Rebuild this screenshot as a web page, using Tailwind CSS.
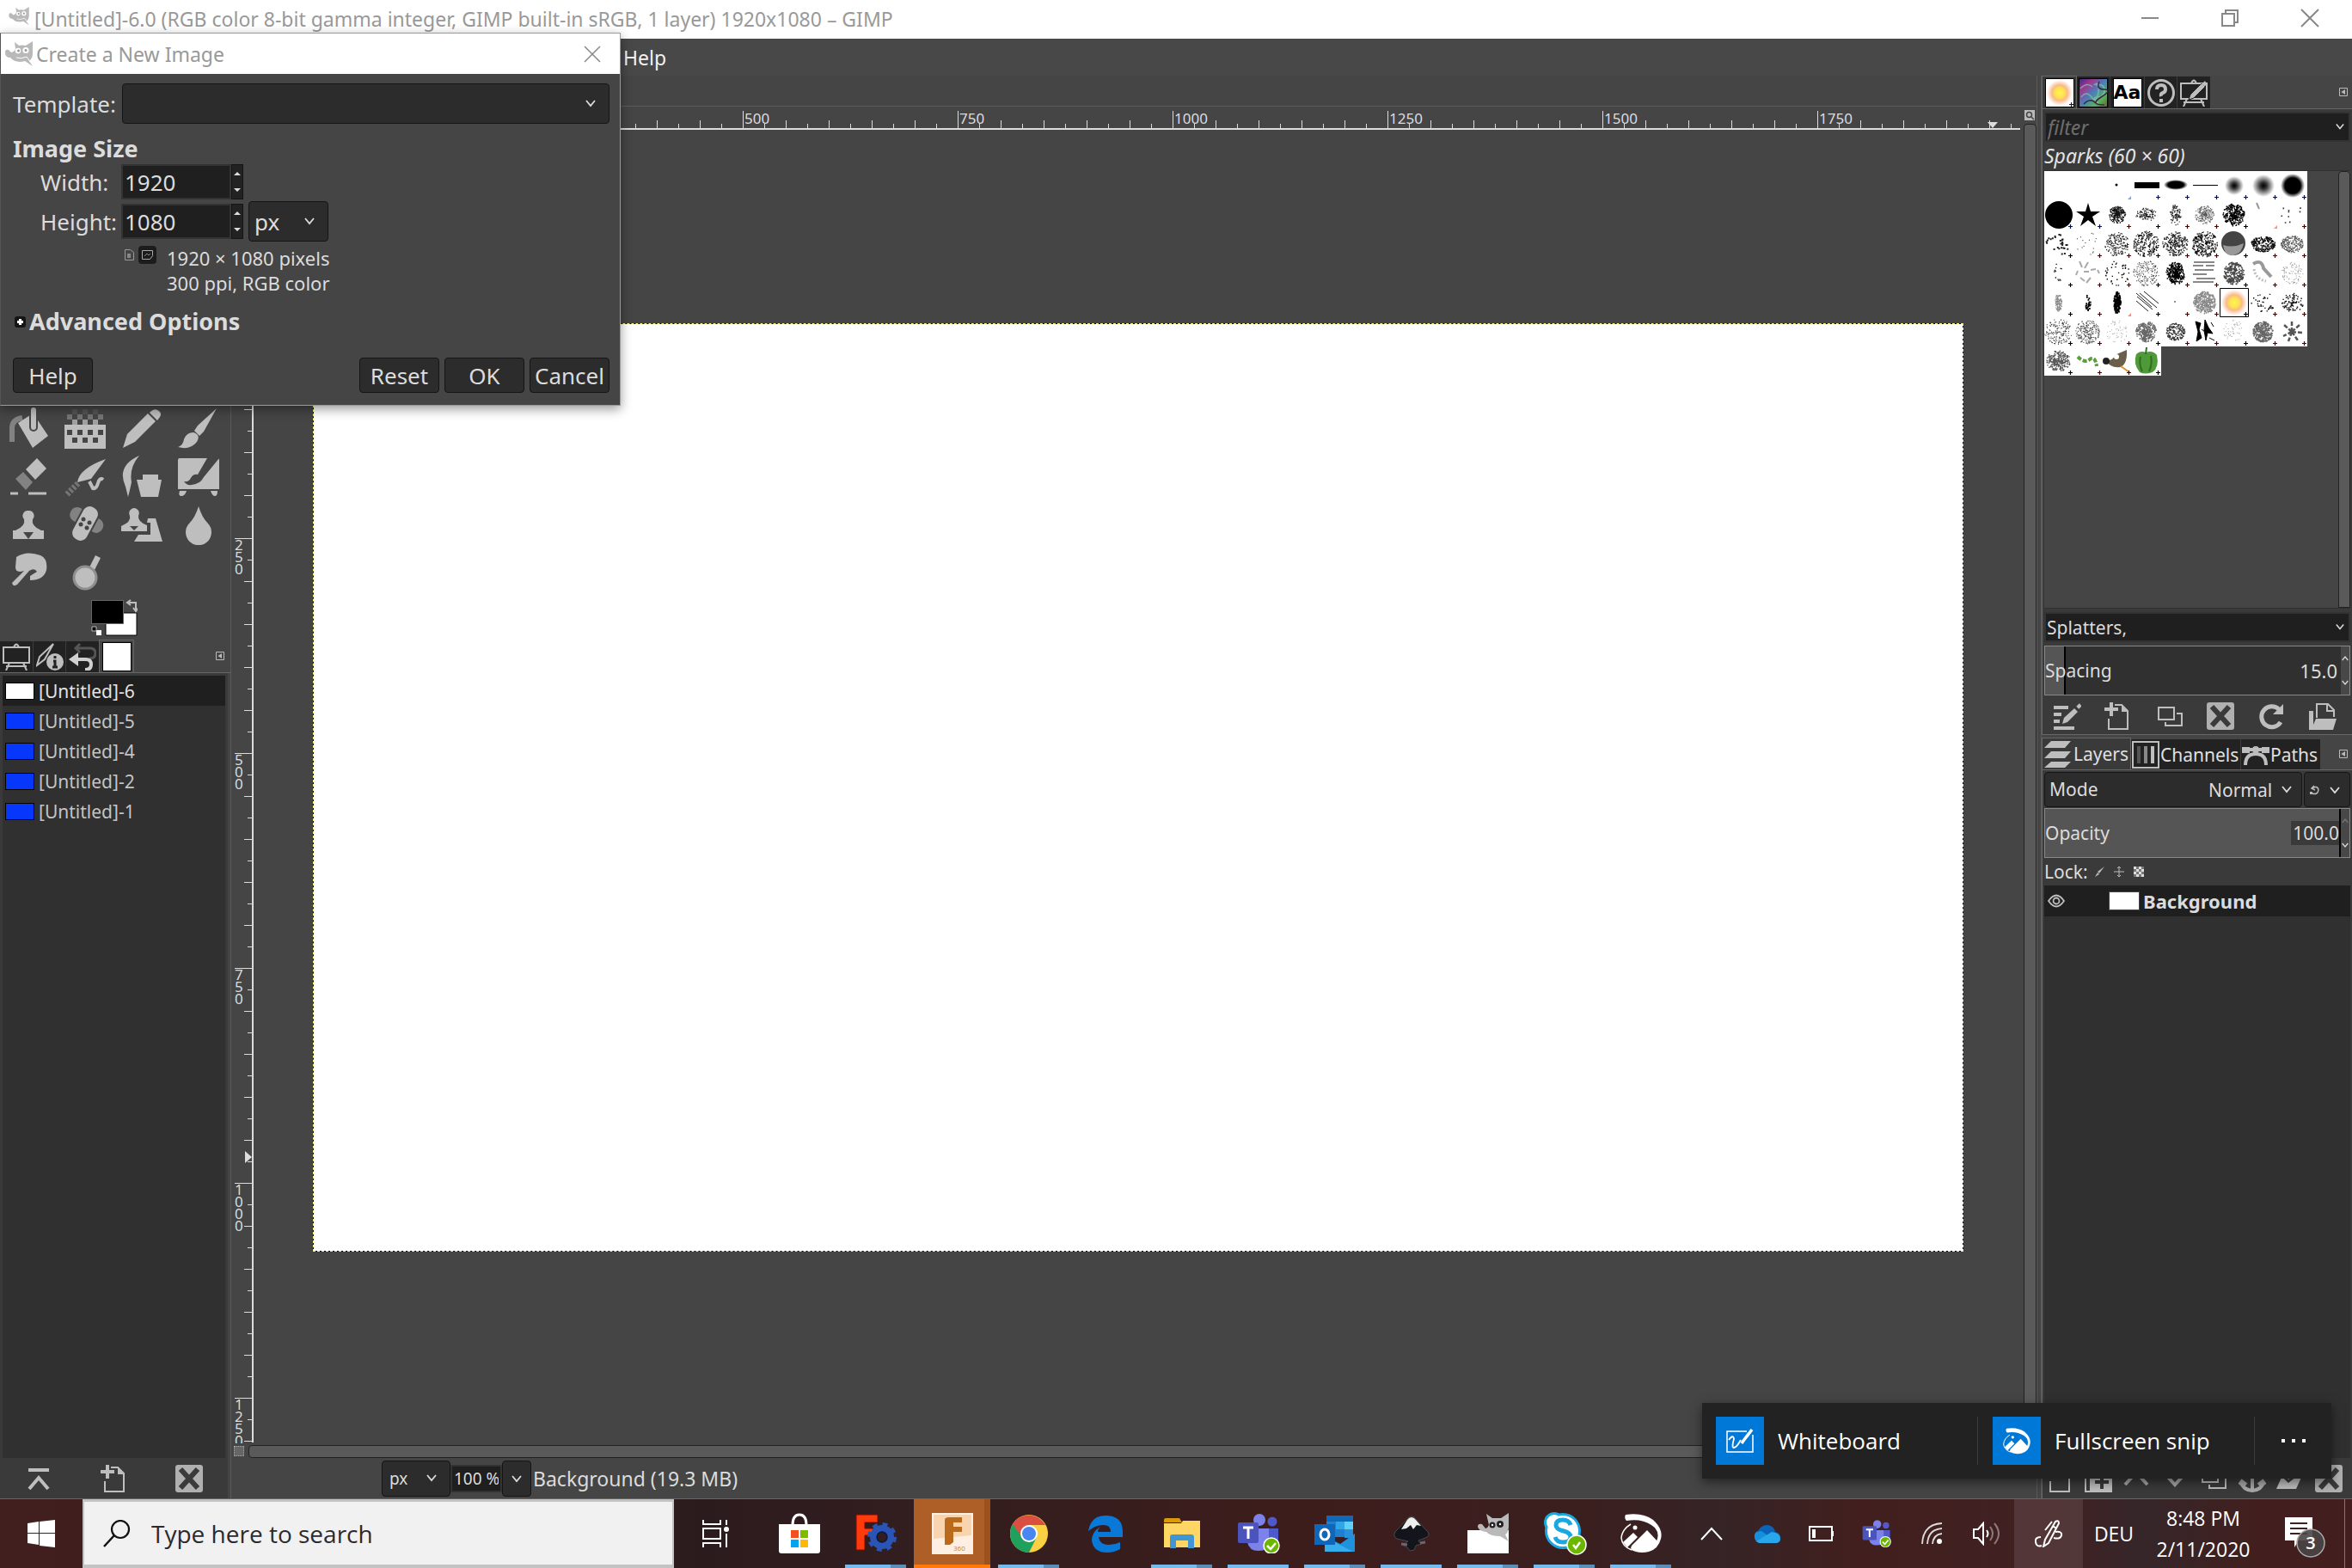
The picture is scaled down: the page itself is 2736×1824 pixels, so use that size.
<!DOCTYPE html>
<html lang="en">
<head>
  <meta charset="UTF-8" />
  <meta name="viewport" content="width=device-width, initial-scale=1.0" />
  <title>GIMP</title>
  <script src="https://cdn.jsdelivr.net/npm/@tailwindcss/browser@4"></script>
</head>
<body class="h-screen overflow-hidden flex flex-col bg-[#454545] text-[#dcdcdc] font-['Noto_Sans',sans-serif] text-[21px] leading-7">

  <!-- Shared icons -->
  <svg class="absolute size-0">
    <symbol id="wilber" viewBox="0 0 32 30">
      <path fill="#b9b9b9" d="M0 13q0-4 4-3l3 3q4-1 5-4L11 1l5 4q4-1 8 0l8-5v14q0 6-4 9l4 6-9-6q-11 3-17-4Q0 19 0 13z"/>
      <circle cx="15" cy="11" r="3.2" fill="#fff"/><circle cx="24" cy="10.500" r="3.600" fill="#fff"/>
      <circle cx="15.500" cy="11" r="1.500" fill="#999"/><circle cx="24" cy="10.500" r="1.500" fill="#999"/>
      <path d="M13 19q6 2 12-1l5 7" fill="none" stroke="#fff" stroke-width="1"/>
    </symbol>
    <symbol id="chevron" viewBox="0 0 12 12"><path d="M1 3l5 6 5-6" fill="none" stroke="currentColor" stroke-width="1.800"/></symbol>
    <symbol id="tabmenu" viewBox="0 0 10 10"><path d="M.5.5h9v9h-9z" fill="none" stroke="#bbb"/><path d="M7 2v6L2.500 5z" fill="#bbb"/></symbol>
    <symbol id="newdoc" viewBox="0 0 32 32"><path d="M5 19v12h22V10l-7-7h-8" fill="none" stroke="#bebebe" stroke-width="2"/><path d="M20 2l8 9h-8z" fill="#bebebe"/><path d="M8 0v16M0 8h16" stroke="#bebebe" stroke-width="4"/></symbol>
    <symbol id="dup" viewBox="0 0 32 32"><path d="M3 6h18v14H3zM24 13h6v14H11v-4" fill="none" stroke="#bebebe" stroke-width="2"/></symbol>
    <symbol id="del" viewBox="0 0 32 32"><rect width="32" height="32" rx="3" fill="#b0b0b0"/><path d="M6 5l20 22M26 5L6 27" stroke="#3a3a3a" stroke-width="6"/></symbol>
    <symbol id="easel" viewBox="0 0 32 32"><path d="M1 5h30v18H1zM8 23l-4 9M24 23l4 9M4 27h24M13 5q3-7 6 0" fill="none" stroke="#bebebe" stroke-width="2"/></symbol>
    <symbol id="snip" viewBox="0 0 48 46">
      <path d="M12 12Q2 18 1 28q1 10 12 14" fill="none" stroke="#fff" stroke-width="1.500"/>
      <path d="M6 1Q26-2 38 7q12 11 9 22-3 12-14 15-12 3-22-3l7-2q18 5 24-7 5-12-6-19Q24 5 7 8q-3-3-1-7z" fill="#fff"/>
      <path d="M13 37l18-18 13 14q-6 11-20 11-7 0-12-4zM3 33l12-11 5 5L8 39z" fill="#fff"/>
      <circle cx="17" cy="16" r="2.500" fill="#fff"/>
    </symbol>
    <symbol id="teams" viewBox="0 0 50 46">
      <circle cx="26" cy="7" r="7" fill="#7b83eb"/><circle cx="41" cy="9" r="5.500" fill="#5059c9"/>
      <path d="M30 17h18v14q-2 10-12 10h-6z" fill="#5059c9"/><path d="M12 17h25v16q-1 10-12 10T12 33z" fill="#7b83eb"/>
      <rect x="1" y="10" width="24" height="24" rx="2" fill="#4b53bc"/><path d="M7 16h12M13 16v13" stroke="#fff" stroke-width="3"/>
      <circle cx="40" cy="37" r="9" fill="#6bb700" stroke="#fff" stroke-width="1.500"/><path d="M35 37l4 4 6-7" fill="none" stroke="#fff" stroke-width="2.500"/>
    </symbol>
    <radialGradient id="sparks"><stop offset="0" stop-color="#fff45a"/><stop offset=".4" stop-color="#fde04e"/><stop offset=".6" stop-color="#f9b98c"/><stop offset="1" stop-color="#fff"/></radialGradient>
    <radialGradient id="soft"><stop offset="0" stop-color="#000"/><stop offset=".3" stop-color="#333"/><stop offset="1" stop-color="#fff"/></radialGradient>
    <radialGradient id="hard"><stop offset="0" stop-color="#000"/><stop offset=".65" stop-color="#000"/><stop offset="1" stop-color="#fff"/></radialGradient>
    <linearGradient id="psy" x2="1" y2="1"><stop offset="0" stop-color="#3b2a8c"/><stop offset=".25" stop-color="#a0378f"/><stop offset=".5" stop-color="#4a7fb8"/><stop offset=".75" stop-color="#56b45c"/><stop offset="1" stop-color="#6d5a3a"/></linearGradient>
  </svg>

  <!-- Title bar -->
  <header class="h-[45px] shrink-0 bg-white flex items-start text-[#999]">
    <svg class="w-6 h-[22px] ml-2.5 mt-2"><use href="#wilber"/></svg>
    <h1 class="ml-1.5 mt-2 text-[23px]">[Untitled]-6.0 (RGB color 8-bit gamma integer, GIMP built-in sRGB, 1 layer) 1920x1080 – GIMP</h1>
    <div class="ml-auto mt-2.5 mr-[38px] flex gap-[71px]">
      <button aria-label="Minimize"><svg class="size-[22px]" viewBox="0 0 22 22"><path d="M1 11h20" stroke="#888" stroke-width="2"/></svg></button>
      <button aria-label="Restore"><svg class="size-[22px]" viewBox="0 0 22 22"><path d="M2 6h14v14H2zM6 6V2h14v14h-4" fill="none" stroke="#888" stroke-width="2"/></svg></button>
      <button aria-label="Close"><svg class="size-[22px]" viewBox="0 0 22 22"><path d="M1 1l20 20M21 1L1 21" stroke="#888" stroke-width="2"/></svg></button>
    </div>
  </header>

  <!-- Menu bar -->
  <nav class="h-[43px] shrink-0 bg-[#484848] flex items-center pl-[725px] text-[23px] text-[#f2f2f2]">
    <a href="#help">Help</a>
  </nav>

  <main class="flex-1 min-h-0 flex border-b border-[#666]">

    <!-- Left dock -->
    <aside class="w-[268px] shrink-0 flex flex-col pt-[382px]">
      <div class="grid grid-cols-4 auto-rows-[56px] place-items-center pr-1 text-[#bebebe]">
        <svg class="size-12" viewBox="0 0 48 48"><path d="M5 40V24q0-10 12-12" fill="none" stroke="#828282" stroke-width="6"/><path d="M12 18l14-9 4 1v14l5-9 12 18-18 14z" fill="currentColor"/><path d="M30 3v20" stroke="#454545" stroke-width="10" stroke-linecap="round"/><path d="M30 3v20" stroke="currentColor" stroke-width="6" stroke-linecap="round"/></svg>
        <svg class="size-12" viewBox="0 0 48 48"><path d="M0 20h48v28H0z" fill="currentColor"/><path d="M3 29h42M9 38h36" stroke="#454545" stroke-width="6" stroke-dasharray="6 6"/><path d="M3 11h42" stroke="#757575" stroke-width="6" stroke-dasharray="6 6"/><path d="M9 17h36" stroke="#a0a0a0" stroke-width="6" stroke-dasharray="6 6"/><path d="M9 5h30" stroke="#555" stroke-width="6" stroke-dasharray="6 6"/></svg>
        <svg class="size-12" viewBox="0 0 48 48"><path d="M2 47l5-16 24-24 9 9-24 24zM34 5q4-4 8-2 6 3 3 8l-3 4-9-9z" fill="currentColor"/></svg>
        <svg class="size-12" viewBox="0 0 48 48"><path d="M45 1L30 28l-5 5-6-6 4-6zM18 29q9 3 4 11-8 10-22 6 6-2 7-9 3-8 11-8z" fill="currentColor"/></svg>

        <svg class="size-12" viewBox="0 0 48 48"><path d="M34 3l11 12-13 13-11-12z" fill="currentColor"/><path d="M18 19l11 12-8 9L9 27z" fill="#828282"/><path d="M3 44h9M24 44h21" stroke="currentColor" stroke-width="3"/></svg>
        <svg class="size-12" viewBox="0 0 48 48"><path d="M48 4L31 27l-16 4q2-16 33-27z" fill="currentColor"/><path d="M29 30l4 8q4 1 6-6t6-4" fill="none" stroke="currentColor" stroke-width="4"/><path d="M3 45l14-14" stroke="#757575" stroke-width="7" stroke-dasharray="3 2"/></svg>
        <svg class="size-12" viewBox="0 0 48 48"><path d="M21 0Q9 14 12 31l-2 9-2 8-3-12Q-6 12 21 0zM25 22h18v6h4l-4 20H23l-5-20h7z" fill="currentColor"/></svg>
        <svg class="size-12" viewBox="0 0 48 48"><path d="M2 3h44q2 0 2 2v34H0V5q0-2 2-2zM2 41h8q-2 6-6 6t-2-6zM38 41h8q0 6-3 6t-5-6z" fill="currentColor"/><path d="M34 3h14L30 25q-4 8-14 9-6 1-9-4 6 1 8-4 3-5 8-4z" fill="#454545"/></svg>

        <svg class="size-12" viewBox="0 0 48 48"><path d="M24 8a6 6 0 015 10q-2 8 10 13h3v10H6V31h3q12-5 10-13a6 6 0 015-10z" fill="currentColor"/><path d="M18 33h12l-6 8z" fill="#454545"/></svg>
        <svg class="size-12" viewBox="0 0 48 48"><rect x="3" y="10" width="42" height="17" rx="8" transform="rotate(30 24 22)" fill="#828282"/><rect x="14" y="1" width="20" height="44" rx="9" transform="rotate(28 24 23)" fill="currentColor" stroke="#454545" stroke-width="2"/><g fill="#454545"><circle cx="22" cy="18" r="2.500"/><circle cx="29" cy="22" r="2.500"/><circle cx="19" cy="24" r="2.500"/><circle cx="26" cy="28" r="2.500"/></g></svg>
        <svg class="size-12" viewBox="0 0 48 48"><path d="M15 5a6 6 0 015 9q-1 7 10 11v7H0v-6q12-5 10-12a6 6 0 015-9z" fill="currentColor"/><path d="M10 26h10l-5 5z" fill="#454545"/><path d="M31 17h9l8 27H15l5-8h14V22h-4z" fill="currentColor"/></svg>
        <svg class="size-12" viewBox="0 0 48 48"><path d="M24 3q4 13 11 20a15 15 0 11-22 0Q20 16 24 3z" fill="currentColor"/></svg>

        <svg class="size-12" viewBox="0 0 48 48"><path d="M10 6Q22-2 38 4q9 4 7 17-3 12-19 12v-5l8-5q-3-5-9-1L11 38q-5 3-6-2l14-14q-10 3-10-4z" fill="currentColor"/></svg>
        <svg class="size-12" viewBox="0 0 48 48"><path d="M28 20l8-16 6 3-8 16z" fill="currentColor"/><circle cx="24" cy="30" r="13" fill="currentColor" stroke="#8f8f8f" stroke-width="3"/></svg>
      </div>

      <!-- Foreground / background colours -->
      <div class="h-[50px] pl-[106px]">
        <svg class="w-[54px] h-[48px]" viewBox="0 0 54 48"><path d="M17 19h36v26H17z" fill="#fff" stroke="#000"/><path d="M.5 4.500h37v27H.500z" fill="#000" stroke="#666"/><path d="M44 7h8v9M46 4l-4 3 4 3M49 13l3 4 3-4" fill="none" stroke="#bebebe" stroke-width="2"/><path d="M6 39h6v6H6z" fill="#fff"/><path d="M1 35h5v5H1z" fill="#000" stroke="#bbb"/></svg>
      </div>

      <div class="h-[39px] flex items-end border-b border-[#666]">
        <div class="flex h-9 bg-[#222] divide-x divide-[#3c3c3c]">
          <button class="w-[39px] grid place-items-center" aria-label="Tool options"><svg class="size-8"><use href="#easel"/></svg></button>
          <button class="w-[38px] grid place-items-center" aria-label="Device status"><svg class="size-8" viewBox="0 0 32 32"><path d="M20 1L4 16 1 26l9-7z" fill="none" stroke="#bebebe" stroke-width="2"/><circle cx="22" cy="22" r="10" fill="#bebebe"/><path d="M22 15v3M20 21h2v7M19 28h6" stroke="#222" stroke-width="3" fill="none"/></svg></button>
          <button class="w-[38px] grid place-items-center" aria-label="Undo history"><svg class="size-8" viewBox="0 0 32 32"><path d="M8 6h16q7 0 7 6t-7 6M13 1L8 6l5 5" fill="none" stroke="#555" stroke-width="3"/><path d="M4 19h16q6 0 6 6t-7 6" fill="none" stroke="#d0d0d0" stroke-width="4"/><path d="M11 11L0 19l11 8z" fill="#d0d0d0"/></svg></button>
        </div>
        <button class="w-[41px] h-[38px] grid place-items-center border-x border-t border-[#666]" aria-label="Images"><span class="size-[34px] bg-white border border-black"></span></button>
        <svg class="size-[10px] ml-auto mr-[7px] mb-[14px]"><use href="#tabmenu"/></svg>
      </div>

      <ul class="flex-1 bg-[#303030] border-x-[3px] border-t-[3px] border-[#3a3a3a] mr-[3px] text-[#c4c4c4]">
        <li class="h-[35px] flex items-center gap-[5px] px-[3px] bg-[#1f1f1f] text-[#e2e2e2]"><span class="w-[34px] h-5 border border-black bg-white"></span>[Untitled]-6</li>
        <li class="h-[35px] flex items-center gap-[5px] px-[3px]"><span class="w-[34px] h-5 border border-black bg-[#0637fb]"></span>[Untitled]-5</li>
        <li class="h-[35px] flex items-center gap-[5px] px-[3px]"><span class="w-[34px] h-5 border border-black bg-[#0637fb]"></span>[Untitled]-4</li>
        <li class="h-[35px] flex items-center gap-[5px] px-[3px]"><span class="w-[34px] h-5 border border-black bg-[#0637fb]"></span>[Untitled]-2</li>
        <li class="h-[35px] flex items-center gap-[5px] px-[3px]"><span class="w-[34px] h-5 border border-black bg-[#0637fb]"></span>[Untitled]-1</li>
      </ul>
      <div class="h-[47px] bg-[#3a3a3a] mr-[3px] flex items-center justify-between pl-[29px] pr-[29px]">
        <button aria-label="Raise"><svg class="size-8" viewBox="0 0 32 32"><path d="M4 6h24" stroke="#bebebe" stroke-width="4"/><path d="M5 28l11-13 11 13" fill="none" stroke="#bebebe" stroke-width="4"/></svg></button>
        <button aria-label="New view"><svg class="size-8"><use href="#newdoc"/></svg></button>
        <button aria-label="Delete"><svg class="size-8"><use href="#del"/></svg></button>
      </div>
    </aside>

    <!-- Image window -->
    <section class="flex-1 min-w-0 flex flex-col border-l border-[#5a5a5a]">
      <div class="h-9 border-b border-[#5c5c5c]"></div>
      <div class="flex-1 min-h-0 flex">
        <div class="flex-1 min-w-0 flex flex-col">
          <svg id="rulerX" class="h-[27px] w-full shrink-0 text-[17px]" fill="#dcdcdc" stroke="none"></svg>
          <div class="flex-1 min-h-0 flex">
            <svg id="rulerY" class="w-[26px] h-full shrink-0 text-[17px]" fill="#dcdcdc"></svg>
            <div class="flex-1 min-w-0 flex items-center justify-center pt-0.5">
              <!-- yellow dashes over black mark the layer boundary -->
              <div class="w-[1920px] h-[1080px] shrink-0 bg-black border border-dashed border-[#f4f47c]"><div class="size-full bg-white"></div></div>
            </div>
          </div>
        </div>
        <div class="w-4 flex flex-col items-center pt-1 gap-1">
          <svg class="size-3" viewBox="0 0 12 12"><path d="M0 0h12v12H0z" fill="#bbb"/><circle cx="5.500" cy="5.500" r="3" fill="none" stroke="#444" stroke-width="1.500"/><path d="M8 8l3 3" stroke="#444" stroke-width="1.500"/></svg>
          <div class="w-[15px] flex-1 bg-[#5a5a5a] border border-[#222] rounded-t-sm"></div>
        </div>
      </div>
      <div class="h-[18px] flex items-center gap-[5px] pl-[3px] pr-[18px]">
        <div class="size-3 border border-dotted border-[#aaa] bg-[#666]"></div>
        <div class="flex-1 h-[15px] bg-[#5a5a5a] border border-[#222] rounded-l-sm"></div>
      </div>
      <footer class="h-[46px] flex items-center pl-[175px] text-[19px]">
        <div class="relative">
          <select aria-label="Unit" class="appearance-none w-20 h-[42px] pl-2 bg-[#2c2c2c] border border-[#151515] rounded"><option>px</option></select>
          <svg class="absolute right-4 top-[14px] size-3"><use href="#chevron"/></svg>
        </div>
        <input aria-label="Zoom" value="100 %" class="w-[60px] h-8 px-0.5 bg-[#1f1f1f] border-2 border-[#333]" />
        <button class="w-[34px] h-[42px] grid place-items-center bg-[#2c2c2c] border border-[#151515] rounded" aria-label="Zoom list"><svg class="size-3"><use href="#chevron"/></svg></button>
        <span class="ml-[2px] text-[23px]">Background (19.3 MB)</span>
      </footer>
    </section>

    <!-- Right dock -->
    <aside class="w-[367px] shrink-0 flex">
      <div class="w-[6px] border-x border-[#5a5a5a]"></div>
      <div class="flex-1 min-w-0 flex flex-col">
        <div class="h-[39px] flex items-end border-b border-[#666]">
          <button class="w-[41px] h-[38px] grid place-items-center border-x border-t border-[#666] bg-[#3a3a3a]" aria-label="Brushes"><svg class="size-[34px]" viewBox="0 0 34 34"><path d="M.5.5h33v33H.500z" fill="#fff" stroke="#000"/><circle cx="17" cy="17" r="15" fill="url(#sparks)"/><path d="M30.500 28v5M28 30.500h5" stroke="#500"/></svg></button>
          <div class="flex h-[37px] bg-[#222] divide-x divide-[#3c3c3c]">
            <button class="w-[39px] grid place-items-center" aria-label="Patterns"><svg class="size-[34px]" viewBox="0 0 34 34"><path d="M.5.5h33v33H.500z" fill="url(#psy)" stroke="#000"/><path d="M3 22q6-8 12 0t8-6-5-8M20 8q10-2 10 6t-8 8 2 8M2 12q8-8 14-2" fill="none" stroke="#8cc0b0" stroke-width="1.500" opacity=".7"/><path d="M24 4q-4 9 6 9t-4 9 4 9M6 30q8-8 14-1" fill="none" stroke="#3c2440" stroke-width="1.500"/></svg></button>
            <button class="w-10 grid place-items-center" aria-label="Fonts"><span class="size-[34px] grid place-items-center bg-white border border-black text-black font-bold font-['DejaVu_Sans',sans-serif] text-[22px] leading-8">Aa</span></button>
            <button class="w-[38px] grid place-items-center" aria-label="Help"><svg class="size-8" viewBox="0 0 32 32"><circle cx="16" cy="16" r="14.500" fill="none" stroke="#bebebe" stroke-width="3"/><path d="M11 12q0-5 5-5t5 5q0 3-3 4t-2 4M16 23v4" fill="none" stroke="#bebebe" stroke-width="4"/></svg></button>
            <button class="w-[38px] grid place-items-center" aria-label="Tool preset"><svg class="size-8" viewBox="0 0 32 32"><use href="#easel"/><path d="M10 24l2-6L25 5l4 4-13 13z" fill="#bebebe" stroke="#222"/><path d="M27 4l3 3" stroke="#bebebe" stroke-width="5"/></svg></button>
          </div>
          <svg class="size-[10px] ml-auto mr-[5px] mb-[14px]"><use href="#tabmenu"/></svg>
        </div>

        <div class="bg-[#3a3a3a] px-[2px] pt-[3px] border-l border-[#666] border-b h-[728px]">
          <div class="relative">
            <input aria-label="Filter" placeholder="filter" class="block w-full h-[35px] px-0.5 bg-[#1f1f1f] border-2 border-[#333] italic text-[23px] placeholder:text-[#6e6e6e]" />
            <svg class="absolute right-[7px] top-3 size-[10px]"><use href="#chevron"/></svg>
          </div>
          <p class="h-[33px] leading-[32px] italic text-[23px] text-[#e4e4e4]">Sparks (60 × 60)</p>
          <div class="flex h-[510px] bg-[#454545] border-y border-[#303030]">
            <svg id="brushes" class="w-[306px] h-[238px]" viewBox="0 0 306 238"></svg>
            <div class="ml-auto w-[14px] bg-[#5a5a5a] border border-[#222] rounded-t-sm"></div>
          </div>
          <div class="relative mt-1">
            <input aria-label="Tag" value="Splatters," class="block w-full h-[35px] px-px bg-[#1f1f1f] border-2 border-[#333]" />
            <svg class="absolute right-[7px] top-3 size-[10px]"><use href="#chevron"/></svg>
          </div>
          <div class="mt-1 h-[58px] flex items-center border border-[#888] bg-[linear-gradient(90deg,#555_22px,#000_22px,#000_24px,#303030_24px)]">
            <label for="spacing">Spacing</label>
            <input id="spacing" value="15.0" class="ml-auto w-20 text-right pr-1 bg-transparent text-[22px]" />
            <div class="w-[10px] h-full bg-[#484848] flex flex-col justify-between items-center py-[10px]"><svg class="size-2 rotate-180"><use href="#chevron"/></svg><svg class="size-2"><use href="#chevron"/></svg></div>
          </div>
          <div class="h-[47px] flex items-center justify-between pl-[11px] pr-[16px]">
            <button aria-label="Edit brush"><svg class="size-8" viewBox="0 0 32 32"><path d="M0 6h17M0 14h9M0 22h7M0 30h24" stroke="#bebebe" stroke-width="4"/><path d="M10 25l2-7L24 7l4 4-12 12z" fill="#bebebe"/><path d="M28 3l3 3" stroke="#bebebe" stroke-width="5"/></svg></button>
            <button aria-label="New brush"><svg class="size-8"><use href="#newdoc"/></svg></button>
            <button aria-label="Duplicate brush"><svg class="size-8"><use href="#dup"/></svg></button>
            <button aria-label="Delete brush"><svg class="size-8"><use href="#del"/></svg></button>
            <button aria-label="Refresh brushes"><svg class="size-8" viewBox="0 0 32 32"><path d="M26 23a12 12 0 11-2-15" fill="none" stroke="#bebebe" stroke-width="5"/><path d="M29 2v12H17z" fill="#bebebe"/></svg></button>
            <button aria-label="Open as image"><svg class="size-8" viewBox="0 0 32 32"><path d="M9 18V2h13l7 7v8M21 2v8h8" fill="none" stroke="#bebebe" stroke-width="2"/><path d="M0 10h5v16l3-7h24l-4 13H0z" fill="#bebebe"/></svg></button>
          </div>
        </div>

        <div class="h-[41px] flex items-end border-b border-[#666] text-[#e0e0e0]">
          <button class="w-[104px] h-[37px] flex items-center gap-[2px] pl-[2px] bg-[#3a3a3a] border-x border-t border-[#666]"><svg class="w-8 h-[31px] shrink-0" viewBox="0 0 32 31"><path d="M8 0h23l-7 8H0zM8 12h23l-7 8H0zM8 24h23l-7 7H0z" fill="#bebebe"/></svg>Layers</button>
          <div class="flex h-[35px] bg-[#222] divide-x divide-[#3c3c3c]">
            <button class="w-[128px] flex items-center gap-px pl-px"><svg class="size-8 shrink-0" viewBox="0 0 32 32"><path d="M1 1h30v30H1z" fill="none" stroke="#bebebe" stroke-width="2"/><path d="M8 6v20" stroke="#555" stroke-width="4"/><path d="M16 6v20" stroke="#888" stroke-width="4"/><path d="M24 6v20" stroke="#bebebe" stroke-width="4"/></svg>Channels</button>
            <button class="w-[92px] flex items-center gap-px pl-px"><svg class="size-8 shrink-0" viewBox="0 0 32 32"><path d="M0 7h9v7H0zM23 7h9v7h-9z" fill="#bebebe"/><circle cx="16" cy="10" r="4" fill="#bebebe"/><path d="M6 10h20M4 28q0-13 12-13t12 13" fill="none" stroke="#bebebe" stroke-width="4"/></svg>Paths</button>
          </div>
          <svg class="size-[10px] ml-auto mr-[5px] mb-[13px]"><use href="#tabmenu"/></svg>
        </div>

        <div class="flex-1 min-h-0 flex flex-col bg-[#3a3a3a] px-[2px] pt-[2px] border-l border-[#666]">
          <div class="flex gap-[2px] h-[41px]">
            <div class="relative flex-1">
              <label for="mode" class="absolute left-[6px] top-[6px]">Mode</label>
              <select id="mode" class="appearance-none w-full h-full pl-[190px] bg-[#2c2c2c] border border-[#151515] rounded"><option>Normal</option></select>
              <svg class="absolute right-3 top-[14px] size-3"><use href="#chevron"/></svg>
            </div>
            <button class="w-[54px] flex items-center gap-3 pl-[5px] bg-[#2c2c2c] border border-[#151515] rounded" aria-label="Mode group"><svg class="size-3" viewBox="0 0 12 12"><path d="M3 4q7-4 8 2-1 6-7 4M6 1L3 4l4 2" fill="none" stroke="#bbb" stroke-width="1.500"/><path d="M1 8h3v3H1z" fill="#bbb"/></svg><svg class="size-3"><use href="#chevron"/></svg></button>
          </div>
          <div class="mt-px h-[58px] flex items-center border border-[#888] bg-[#555]">
            <label for="opacity">Opacity</label>
            <input id="opacity" value="100.0" class="ml-auto w-[56px] h-7 text-right bg-[#3a3a3a]" />
            <div class="w-[12px] h-full bg-[#484848] border-l-2 border-black flex flex-col justify-between items-center py-[10px]"><svg class="size-2 rotate-180 text-[#777]"><use href="#chevron"/></svg><svg class="size-2"><use href="#chevron"/></svg></div>
          </div>
          <div class="h-8 flex items-center gap-[11px]">Lock:
            <svg class="size-3 -ml-1" viewBox="0 0 12 12"><path d="M12 0L6 8l-2-2zM4 7l2 2-5 3z" fill="#bbb"/></svg>
            <svg class="size-3" viewBox="0 0 12 12"><path d="M6 0v12M0 6h12M4 2l2-2 2 2M4 10l2 2 2-2" stroke="#bbb" fill="none"/></svg>
            <svg class="size-3" viewBox="0 0 12 12"><path d="M0 0h12v12H0z" fill="#777"/><path d="M0 0h3v3H0zM6 0h3v3H6zM3 3h3v3H3zM9 3h3v3H9zM0 6h3v3H0zM6 6h3v3H6zM3 9h3v3H3zM9 9h3v3H9z" fill="#ddd"/></svg>
          </div>
          <div class="flex-1 bg-[#303030]">
            <div class="h-9 flex items-center bg-[#1f1f1f] font-bold text-[22px]">
              <svg class="w-5 h-4 ml-1" viewBox="0 0 20 16"><path d="M1 8q9-13 18 0-9 13-18 0z" fill="none" stroke="#bebebe" stroke-width="1.800"/><circle cx="10" cy="8" r="3.500" fill="none" stroke="#bebebe" stroke-width="1.800"/></svg>
              <span class="w-9 h-[22px] ml-[51px] mr-1 bg-white border border-[#444]"></span>Background
            </div>
          </div>
          <div class="h-[47px] flex items-center justify-between pl-0.5 pr-[9px]">
            <svg class="size-8"><use href="#newdoc"/></svg>
            <svg class="size-8" viewBox="0 0 32 32"><path d="M0 0h32v32H0z" fill="#bebebe"/><path d="M4 8v22M20 12v16M12 20h16" stroke="#3a3a3a" stroke-width="4"/></svg>
            <svg class="size-8" viewBox="0 0 32 32"><path d="M3 23L16 9l13 14" fill="none" stroke="#a9a9a9" stroke-width="4"/></svg>
            <svg class="size-8" viewBox="0 0 32 32"><path d="M3 9l13 14L29 9" fill="none" stroke="#a9a9a9" stroke-width="4"/></svg>
            <svg class="size-8"><use href="#dup"/></svg>
            <svg class="size-8" viewBox="0 0 32 32"><path d="M16 4v25M3 20q2 9 13 10 11-1 13-10M1 23l3-4 5 4M31 23l-3-4-5 4" fill="none" stroke="#a9a9a9" stroke-width="4"/></svg>
            <svg class="size-8" viewBox="0 0 32 32"><path d="M9 8h23L23 28H0z" fill="#bebebe"/><path d="M9 14l5 5 12-9" fill="none" stroke="#3a3a3a" stroke-width="3"/></svg>
            <svg class="size-8"><use href="#del"/></svg>
          </div>
        </div>
      </div>
    </aside>
  </main>

  <!-- Taskbar -->
  <div class="h-20 shrink-0 flex bg-[linear-gradient(90deg,#421f1e_0%,#2c1b1d_30%,#321d1f_38%,#3d1d1c_55%,#3a1f1f_68%,#352426_73%,#421f1e_79%,#3f2122_88%,#35262a_91%,#421f1e_96%)] text-white font-['Open_Sans',sans-serif]">
    <button class="w-24 grid place-items-center" aria-label="Start"><svg class="size-8" viewBox="0 0 32 32"><path d="M0 4l13-2v13H0zM14 2l18-2v15H14zM0 16h13v13L0 27zM14 16h18v16l-18-2z" fill="#fff"/></svg></button>
    <label class="w-[688px] flex items-center gap-6 pl-[22px] bg-[#f1f1f1] border-4 border-x-2 border-t-[3px] border-[#c3c3c3]">
      <svg class="size-8" viewBox="0 0 32 32"><circle cx="20" cy="11" r="10" fill="none" stroke="#111" stroke-width="2.200"/><path d="M13 18L1 31" stroke="#111" stroke-width="2.500"/></svg>
      <input type="text" placeholder="Type here to search" class="flex-1 h-10 text-[28px] placeholder:text-[#2b2b2b]" />
    </label>
    <button class="w-[101px] pr-1 grid place-items-center" aria-label="Task view"><svg class="size-8" viewBox="0 0 32 32"><path d="M1 0v5h20V0M1 32v-5h20v5M1 10h20v12H1zM28 0v6M28 16v16" fill="none" stroke="#fff" stroke-width="2"/><circle cx="28" cy="11" r="3" fill="#fff"/></svg></button>
    <button class="w-[89px] grid place-items-center" aria-label="Store"><svg class="size-12" viewBox="0 0 48 48"><path d="M0 13h48v31q0 3-3 3H3q-3 0-3-3z" fill="#fff"/><path d="M16 14Q16 2 24 2t8 12" fill="none" stroke="#fff" stroke-width="3"/><path d="M14 20h9v9h-9z" fill="#f25022"/><path d="M25 20h9v9h-9z" fill="#7fba00"/><path d="M14 31h9v9h-9z" fill="#00a4ef"/><path d="M25 31h9v9h-9z" fill="#ffb900"/></svg></button>
    <button class="w-[89px] relative grid place-items-center" aria-label="FreeCAD"><svg class="size-12" viewBox="0 0 48 48"><path d="M1 2h25v9H11v7h10v8H11v17H1z" fill="#ff3b0c" stroke="#7c0a00"/><circle cx="31" cy="28" r="10" fill="none" stroke="#2a55b5" stroke-width="8"/><circle cx="31" cy="28" r="15" fill="none" stroke="#2a55b5" stroke-width="4" stroke-dasharray="5.900 5.900"/><circle cx="31" cy="28" r="6" fill="none" stroke="#0a1740" stroke-width="1.500"/></svg><span class="absolute bottom-0 inset-x-[9px] h-1 bg-[linear-gradient(90deg,#76b9ed_75%,#5d8db4_75%)]"></span></button>
    <button class="w-[89px] relative grid place-items-center bg-[linear-gradient(90deg,#ad5f27_92%,#9b521f_92%)]" aria-label="Fusion 360"><svg class="size-12" viewBox="0 0 48 48"><path d="M0 0h48v48H0z" fill="#fdf0e2"/><path d="M2 2h44v24L2 30z" fill="#f5c99a" opacity=".7"/><path d="M15 8q0-3 5-3h15v6H25v5h10v6H25v12l-4 3h-6z" fill="#b96a1d"/><text x="25" y="44" font-size="8" fill="#c9803a">360</text></svg><span class="absolute bottom-0 inset-x-0 h-1 bg-[#ff7a0a]"></span></button>
    <button class="w-[89px] relative grid place-items-center" aria-label="Chrome"><svg class="size-[46px]" viewBox="0 0 46 46"><circle cx="23" cy="23" r="22" fill="#fbd043"/><path d="M4 12a22 22 0 0019 33l9-18-9 4z" fill="#1fa15d"/><path d="M4 12A22 22 0 0142 13H23l-9 13z" fill="#da4f42"/><circle cx="23" cy="23" r="10" fill="#fff"/><circle cx="23" cy="23" r="8" fill="#4a86f0"/></svg><span class="absolute bottom-0 inset-x-[9px] h-1 bg-[linear-gradient(90deg,#76b9ed_75%,#5d8db4_75%)]"></span></button>
    <button class="w-[89px] grid place-items-center" aria-label="Edge"><svg class="size-11" viewBox="0 0 44 44"><path d="M2 19Q5 1 22 1q20 0 20 19v6H14q1 9 12 9 7 0 13-3v8q-7 4-15 4Q8 44 6 30q0-10 10-16-3 3-3 6h15q0-8-8-8-10 0-18 7z" fill="#0a78d7"/></svg></button>
    <button class="w-[89px] relative grid place-items-center" aria-label="File Explorer"><svg class="w-[42px] h-9" viewBox="0 0 42 36"><path d="M0 2q0-2 2-2h16l3 5H0z" fill="#d99a0b"/><path d="M0 6h20l2-3h20v31H0z" fill="#fdd663"/><path d="M7 35V22q0-3 3-3h22q3 0 3 3v13h-7v-9H14v9z" fill="#3f96d2"/></svg><span class="absolute bottom-0 inset-x-[9px] h-1 bg-[linear-gradient(90deg,#76b9ed_75%,#5d8db4_75%)]"></span></button>
    <button class="w-[89px] relative grid place-items-center" aria-label="Teams"><svg class="w-[50px] h-[46px]"><use href="#teams"/></svg><span class="absolute bottom-0 inset-x-[9px] h-1 bg-[#76b9ed]"></span></button>
    <button class="w-[89px] relative grid place-items-center" aria-label="Outlook"><svg class="w-12 h-[42px]" viewBox="0 0 48 42"><path d="M14 0h31v12H14z" fill="#0f69b8"/><path d="M14 7h21v18H14z" fill="#1f7fd0"/><path d="M25 7h10v9H25z" fill="#32a5e6"/><path d="M35 7h10v9H35z" fill="#5fd0f8"/><path d="M35 16h10v10H35z" fill="#2a90dc"/><path d="M12 42V24l18 9 17-12v21z" fill="#1e92dc"/><path d="M12 42V25l33 17z" fill="#36aeee"/><path d="M0 10h24v24H0z" fill="#1066b8"/><ellipse cx="12" cy="22" rx="5" ry="6" fill="none" stroke="#fff" stroke-width="3"/></svg><span class="absolute bottom-0 inset-x-[9px] h-1 bg-[linear-gradient(90deg,#76b9ed_75%,#5d8db4_75%)]"></span></button>
    <button class="w-[89px] relative grid place-items-center" aria-label="Inkscape"><svg class="w-[42px] h-[42px]" viewBox="0 0 42 42"><path d="M21 1q3 0 5 3l14 15q3 5-3 7l-8 3 3 4-6 2-2 5-5 1-3-4-6-3 7-4-13-3q-5-3-2-8L16 4q2-3 5-3z" fill="#12151c" stroke="#555" stroke-width=".8"/><path d="M21 2q3 0 5 3l6 7-5-1-4 5-3-5-5 4-6 1 7-11q2-3 5-3z" fill="#eee"/><path d="M9 33l7 1M31 32l6-1" stroke="#667" stroke-width="3"/></svg><span class="absolute bottom-0 inset-x-[9px] h-1 bg-[#76b9ed]"></span></button>
    <button class="w-[89px] relative grid place-items-center" aria-label="GIMP"><svg class="size-12" viewBox="0 0 48 48"><path d="M0 20h48v27H0z" fill="#fff"/><path d="M12 16q0-4 5-3l4 5q3-1 4-4l-3-13 7 5h10l9-6v15q0 8-4 10l4 8-10-6q-12 0-16-5-9-1-10-6z" fill="#b9b9b9"/><circle cx="29" cy="14" r="3.500" fill="#222"/><circle cx="38" cy="13" r="4" fill="#222"/><circle cx="29" cy="14" r="1.200" fill="#fff"/><circle cx="38" cy="13" r="1.200" fill="#fff"/></svg><span class="absolute bottom-0 inset-x-[9px] h-1 bg-[linear-gradient(90deg,#76b9ed_75%,#5d8db4_75%)]"></span></button>
    <button class="w-[89px] relative grid place-items-center" aria-label="Skype"><svg class="w-[52px] h-[50px]" viewBox="0 0 52 50"><circle cx="14" cy="12" r="12" fill="#1ba7e0"/><circle cx="24" cy="22" r="21" fill="#1ba7e0"/><circle cx="32" cy="32" r="11" fill="#1ba7e0"/><circle cx="14" cy="12" r="9" fill="#fff"/><circle cx="24" cy="22" r="18" fill="#fff"/><path d="M33 15q-2-6-9-6-8 0-8 6 0 5 9 7 8 2 8 7 0 6-9 6-7 0-9-6" fill="none" stroke="#1ba7e0" stroke-width="5"/><circle cx="40" cy="38" r="11" fill="#6bb700" stroke="#fff" stroke-width="1.500"/><path d="M36 38l3 4 5-7" fill="none" stroke="#fff" stroke-width="2.500"/></svg><span class="absolute bottom-0 inset-x-[9px] h-1 bg-[linear-gradient(90deg,#76b9ed_75%,#5d8db4_75%)]"></span></button>
    <button class="w-[89px] relative grid place-items-center" aria-label="Snip"><svg class="w-12 h-[46px]"><use href="#snip"/></svg><span class="absolute bottom-0 inset-x-[9px] h-1 bg-[linear-gradient(90deg,#76b9ed_75%,#5d8db4_75%)]"></span></button>

    <!-- Tray -->
    <div class="ml-auto flex text-[23px]">
      <button class="w-16 grid place-items-center" aria-label="Show hidden icons"><svg class="w-[26px] h-4" viewBox="0 0 26 16"><path d="M1 15L13 2l12 13" fill="none" stroke="#fff" stroke-width="2"/></svg></button>
      <button class="w-16 grid place-items-center" aria-label="OneDrive"><svg class="w-8 h-[22px]" viewBox="0 0 32 22"><path d="M6 21a6 7 0 010-13Q10 0 18 1q7 2 8 8 6 1 6 7t-6 6z" fill="#0a63b8"/><path d="M6 21a6 7 0 01-2-12l6-1 18 13z" fill="#1490df"/><path d="M4 20l18-11q10 1 10 8 0 5-6 5H7z" fill="#28a8ea"/></svg></button>
      <button class="w-16 grid place-items-center" aria-label="Battery"><svg class="w-[30px] h-[18px]" viewBox="0 0 30 18"><path d="M1 1h26v16H1zM28 6v6" fill="none" stroke="#fff" stroke-width="2"/><path d="M4 4h4v10H4z" fill="#fff"/></svg></button>
      <button class="w-16 grid place-items-center" aria-label="Teams status"><svg class="w-[34px] h-8" viewBox="0 0 50 46"><use href="#teams"/></svg></button>
      <button class="w-16 grid place-items-center" aria-label="Wi-Fi"><svg class="w-6 h-[26px]" viewBox="0 0 24 26"><path d="M1 25Q2 2 24 1M7 25Q8 8 24 7M13 25Q14 14 24 13" fill="none" stroke="#ddd" stroke-width="1.800"/><circle cx="21" cy="22" r="3" fill="#fff"/></svg></button>
      <button class="w-16 grid place-items-center" aria-label="Volume"><svg class="w-8 h-7" viewBox="0 0 32 28"><path d="M1 9h5l6-7v24l-6-7H1z" fill="none" stroke="#fff" stroke-width="2"/><path d="M16 10q3 4 0 8" stroke="#fff" stroke-width="2" fill="none"/><path d="M20 6q6 8 0 16M25 2q10 12 0 24" fill="none" stroke="#8d7a7a" stroke-width="2"/></svg></button>
      <button class="w-20 grid place-items-center bg-white/10" aria-label="Pen workspace"><svg class="size-8" viewBox="0 0 32 32"><path d="M10 31l2-8L24 2q4-2 4 2L16 27zM21 7l4 3M7 20q-7 0-6 6t7 4M24 14q8-1 7 4t-9 3M12 12l8-10" fill="none" stroke="#fff" stroke-width="2"/></svg></button>
      <button class="w-[72px] text-center">DEU</button>
      <div class="w-[136px] flex flex-col items-center justify-center leading-[36px]"><span>8:48 PM</span><span>2/11/2020</span></div>
      <button class="w-24 pl-1 pt-2 grid place-items-center" aria-label="Notifications"><svg class="w-12 h-[48px]" viewBox="0 0 48 48"><path d="M1 1h32v27H17l-5 8v-8H1z" fill="#fff"/><path d="M7 8h20M7 14h20M7 20h20" stroke="#402020" stroke-width="2"/><circle cx="31" cy="31" r="16" fill="#4a4445" fill-opacity=".9" stroke="#aaa" stroke-width="1.500"/><text x="31" y="38" text-anchor="middle" font-size="20" font-weight="600" fill="#fff">3</text></svg></button>
      <div class="w-[9px] border-l border-[#8a7474]"></div>
    </div>
  </div>

  <!-- New image dialog -->
  <form class="absolute left-0 top-[38px] w-[722px] h-[434px] bg-[#454545] border border-[#9a9a9a] border-l-[#555] shadow-[0_4px_12px_rgba(0,0,0,0.4)] text-[26px] leading-9">
    <div class="h-[47px] bg-white flex items-center pl-[5px] pr-[22px] text-[#999] text-[23px]">
      <svg class="w-8 h-[30px]"><use href="#wilber"/></svg>
      <h2 class="ml-1">Create a New Image</h2>
      <button type="button" class="ml-auto" aria-label="Close dialog"><svg class="size-5" viewBox="0 0 20 20"><path d="M1 1l18 18M19 1L1 19" stroke="#888" stroke-width="1.500"/></svg></button>
    </div>
    <div class="pl-[14px] pr-3 pt-[11px]">
      <div class="flex items-center h-[47px]">
        <label for="template" class="w-[127px]">Template:</label>
        <div class="relative flex-1">
          <select id="template" class="block appearance-none w-full h-[47px] bg-[#2c2c2c] border border-[#151515] rounded"><option></option></select>
          <svg class="absolute right-4 top-[17px] size-3"><use href="#chevron"/></svg>
        </div>
      </div>
      <h3 class="mt-[11px] font-bold text-[27px]">Image Size</h3>
      <div class="flex items-center h-[41px]">
        <label for="width" class="w-[126px] pl-8">Width:</label>
        <input id="width" value="1920" class="w-[128px] h-[41px] pl-0.5 bg-[#1f1f1f] border-2 border-[#333]" />
        <div class="w-[14px] h-[41px] bg-[#222] border border-[#151515] flex flex-col items-center justify-around"><svg class="w-2 h-1" viewBox="0 0 8 4"><path d="M0 4l4-4 4 4z" fill="#ddd"/></svg><svg class="w-2 h-1" viewBox="0 0 8 4"><path d="M0 0l4 4 4-4z" fill="#ddd"/></svg></div>
      </div>
      <div class="flex items-center h-[47px] mt-0.5">
        <label for="height" class="w-[126px] pl-8">Height:</label>
        <input id="height" value="1080" class="w-[128px] h-[41px] pl-0.5 bg-[#1f1f1f] border-2 border-[#333]" />
        <div class="w-[14px] h-[41px] bg-[#222] border border-[#151515] flex flex-col items-center justify-around"><svg class="w-2 h-1" viewBox="0 0 8 4"><path d="M0 4l4-4 4 4z" fill="#ddd"/></svg><svg class="w-2 h-1" viewBox="0 0 8 4"><path d="M0 0l4 4 4-4z" fill="#ddd"/></svg></div>
        <div class="relative ml-[6px]">
          <select aria-label="Size unit" class="block appearance-none w-[93px] h-[47px] pl-[6px] bg-[#2c2c2c] border border-[#151515] rounded"><option>px</option></select>
          <svg class="absolute right-4 top-[17px] size-3"><use href="#chevron"/></svg>
        </div>
      </div>
      <div class="flex items-start pl-[130px] pt-[5px] text-[22px] leading-[29px]">
        <button type="button" class="mt-1 mr-[5px]" aria-label="Portrait"><svg class="w-[11px] h-[13px]" viewBox="0 0 11 13"><path d="M.5.5h6l4 3v9H.500z" fill="none" stroke="#999"/><path d="M3 5h4v5H3z" fill="#888"/></svg></button>
        <button type="button" class="w-[21px] h-[21px] grid place-items-center bg-[#1c1c1c] rounded-sm" aria-label="Landscape"><svg class="w-[13px] h-[11px]" viewBox="0 0 13 11"><path d="M.5.5h12v6l-3 4h-9z" fill="none" stroke="#aaa"/><path d="M3 7l3-3 2 2 2-2" fill="none" stroke="#888"/></svg></button>
        <p class="ml-3">1920 × 1080 pixels<br>300 ppi, RGB color</p>
      </div>
      <button type="button" class="mt-3 flex items-center font-bold text-[27px]"><svg class="size-[13px] mr-1 ml-[2px]" viewBox="0 0 13 13"><rect width="13" height="13" rx="3" fill="#151515"/><path d="M6.500 3v7M3 6.500h7" stroke="#fff" stroke-width="3"/></svg>Advanced Options</button>
      <div class="mt-6 flex gap-[6px]">
        <button type="button" class="w-[93px] h-[41px] bg-[#2c2c2c] border border-[#151515] rounded mr-auto">Help</button>
        <button type="button" class="w-[93px] h-[41px] bg-[#2c2c2c] border border-[#151515] rounded">Reset</button>
        <button type="button" class="w-[93px] h-[41px] bg-[#2c2c2c] border border-[#151515] rounded">OK</button>
        <button type="button" class="w-[93px] h-[41px] bg-[#2c2c2c] border border-[#151515] rounded">Cancel</button>
      </div>
    </div>
  </form>

  <!-- Snip popup -->
  <div class="absolute right-6 bottom-[104px] w-[732px] h-[88px] flex items-center pl-4 bg-[#222] shadow-[0_4px_12px_rgba(0,0,0,0.5)] text-white font-['Open_Sans',sans-serif] text-[26px]">
    <button class="w-[305px] h-14 flex items-center gap-4 border-r border-[#3c3c3c]"><span class="size-14 grid place-items-center bg-[#0078d7]"><svg class="w-8 h-7" viewBox="0 0 32 28"><path d="M24 3H1v24h30V7" fill="none" stroke="#fff" stroke-width="1.500"/><path d="M3 13q5-7 6-1-3 10 0 10t8-9" fill="none" stroke="#fff" stroke-width="1.800"/><path d="M30 1L20 14l-2 3" stroke="#fff" stroke-width="3.500"/></svg></span>Whiteboard</button>
    <button class="w-[322px] h-14 flex items-center gap-4 pl-[17px] border-r border-[#3c3c3c]"><span class="size-14 grid place-items-center bg-[#0078d7]"><svg class="w-8 h-[31px]"><use href="#snip"/></svg></span>Fullscreen snip</button>
    <button class="flex-1 grid place-items-center" aria-label="More"><svg class="w-7 h-1" viewBox="0 0 28 4"><path d="M0 0h4v4H0zM12 0h4v4h-4zM24 0h4v4h-4z" fill="#fff"/></svg></button>
  </div>

  <script>
    // Rulers: one tick every 25 units, a label every 250
    const rulerX = document.getElementById("rulerX");
    const rulerY = document.getElementById("rulerY");
    let x = '<rect x="25" y="25" width="2056" height="2"/>';
    for (let u = -50; u <= 1980; u += 25) {
      const h = u % 250 === 0 ? 21 : u % 50 === 0 ? 10 : 6;
      x += `<rect x="${95 + u}" y="${26 - h}" width="1" height="${h}"/>`;
      if (u % 250 === 0) x += `<text x="${97 + u}" y="20">${u}</text>`;
    }
    x += '<path d="M2043 18h12l-6 7z"/>';
    rulerX.innerHTML = x;

    let y = '<rect x="24" y="0" width="2" height="1527"/>';
    for (let u = -200; u <= 1300; u += 25) {
      const w = u % 250 === 0 ? 21 : u % 50 === 0 ? 10 : 6;
      y += `<rect x="${25 - w}" y="${225 + u}" width="${w}" height="1"/>`;
      if (u % 250 === 0) [...String(u)].forEach((d, i) => {
        y += `<text x="4" y="${239 + u + i * 14}">${d}</text>`;
      });
    }
    y += '<path d="M16 1188v14l8-7z"/>';
    rulerY.innerHTML = y;

    // Brush previews. Particle brushes: [count, rx, ry, size, colour, falloff]
    let seed = 7;
    const rnd = () => (seed = (seed * 16807) % 2147483647) / 2147483647;
    const spray = ([n, rx, ry, s, c, f]) => {
      let d = "";
      for (let i = 0; i < n; i++) {
        const a = rnd() * 6.283, r = Math.pow(rnd(), f);
        d += `M${(16 + Math.cos(a) * r * rx).toFixed(1)} ${(17 + Math.sin(a) * r * ry).toFixed(1)}h${s}`;
      }
      return `<path d="${d}" stroke="${c}" stroke-width="${s}"/>`;
    };
    const brushes = [
      "", "", '<circle cx="16" cy="16" r="1.5"/>', '<path d="M3 13h29v7H3z"/>', '<ellipse cx="17" cy="16" rx="14" ry="6" fill="url(#hard)"/>', '<path d="M3 16h29v1H3z"/>',
      '<circle cx="17" cy="17" r="11" fill="url(#soft)"/>', '<circle cx="17" cy="17" r="13" fill="url(#soft)"/>', '<circle cx="17" cy="17" r="14" fill="url(#hard)"/>',
      '<circle cx="17" cy="17" r="16"/>', '<path d="M17 3l3 10h11l-9 6 4 11-9-7-9 7 4-11-9-6h11z"/>', [240, 10, 10, 1.3, "#111", .8], [110, 12, 8, 1.2, "#222", .8], [110, 7, 12, 1.2, "#222", .8], [240, 11, 11, 1, "#555", .9], [300, 13, 13, 1.4, "#000", .8], '<path d="M9 3l3 7" stroke="#999" stroke-width="2"/>', [9, 14, 12, 1.6, "#333", .4],
      [28, 15, 14, 2, "#222", .5], [16, 14, 14, 1, "#222", .5], [170, 14, 14, 1.2, "#222", .6], [230, 15, 15, 1.2, "#111", .4], [230, 15, 14, 1.3, "#222", .6], [260, 15, 15, 1.3, "#111", .5], '<circle cx="16" cy="16" r="14" fill="#444"/><path d="M4 18q12 4 24-2-2 12-12 14T4 18z" fill="#999"/>', [230, 14, 9, 1.4, "#111", .4], [260, 13, 10, 1.1, "#555", .4],
      [12, 5, 14, 1.3, "#111", .5], '<path d="M7 3l3 7M17 4l-4 7M5 14l-2 5M12 15h6M20 13l6-1M8 22l5 4M20 22l-5 6M28 13l2 4" stroke="#aaa" stroke-width="2"/>', [40, 15, 14, 1.4, "#111", .3], [170, 15, 15, 1, "#444", .5], [280, 11, 13, 1.5, "#000", .8], '<path d="M4 4h24M3 8h12M18 8h10M5 13h22M3 18h16M7 23h22M3 27h24" stroke="#111" stroke-width="1"/>', [260, 12, 13, 1.5, "#444", .5], '<path d="M5 6q10-6 12 5l9 10" fill="none" stroke="#555" stroke-width="4" opacity=".6"/><path d="M6 12q2 12 14 14" fill="none" stroke="#bbb" stroke-width="3" stroke-dasharray="2 2"/>', [90, 13, 13, 1, "#999", .5],
      [120, 4, 10, 1.2, "#888", .6], [22, 3, 10, 1.8, "#000", .6], [150, 4, 13, 2, "#000", .7], '<path d="M6 10l18 15M9 6l20 17M14 4l17 14M5 15l14 12M5 6l18 16" stroke="#222"/>', '<circle cx="16" cy="16" r=".8"/>', [420, 13, 13, 1.3, "#888", .6], '<circle cx="17" cy="17" r="15" fill="url(#sparks)"/>', [34, 14, 13, 1.4, "#111", .5], [80, 13, 11, 1.4, "#111", .7],
      [170, 16, 15, 1, "#333", .5], [230, 14, 14, 1.1, "#555", .6], [50, 12, 14, 1, "#aaa", .5], [280, 12, 12, 1.4, "#666", .8], [150, 11, 10, 1.4, "#333", .4], '<path d="M6 5l6 2-2 7 3 10-6 4 2-11zM17 3l4 9 5 7-6-1-2 9-2-12zM24 6l3 5M13 14l4 3M22 24l6 3" stroke="#000"/>', [50, 12, 14, 1, "#aaa", .5], [320, 12, 12, 1.5, "#666", .6], '<path d="M16 17L6 8M16 17V5M16 17L26 8M16 17L28 18M16 17L23 27M16 17L12 28M16 17L6 22" stroke="#555" stroke-width="2.5" stroke-dasharray="5 2"/>',
      [300, 14, 12, 1.3, "#555", .6], '<path d="M5 12q8 8 14 3t8 8" fill="none" stroke="#5a9e3c" stroke-width="4" stroke-dasharray="5 2"/>', '<path d="M4 16q8 1 10-6l14-6q1 16-7 20-12 2-17-8z" fill="#6b5f4c"/><circle cx="4" cy="17" r="4" fill="#222"/><circle cx="16" cy="12" r="3" fill="#fff"/><path d="M21 23l10 7" stroke="#e09030" stroke-width="2"/>', '<path d="M5 9q5-5 11-2 8-3 13 3 3 14-5 20-9 3-15 0Q1 20 5 9z" fill="#4f9a38"/><path d="M17 1l-1 8M10 12q-2 9 2 17M22 11q2 9-2 18" stroke="#2f6d20" stroke-width="2" fill="none"/>'
    ];
    let out = "";
    brushes.forEach((b, i) => {
      const mark = i < 2 ? "" : i === 2 ? '<path d="M33 29v4h-4z" fill="#79a7e0"/>' : i === 16 || i === 38 ? '<path d="M33 29v4h-4z" fill="#f09090"/>'
        : `<path d="M30.500 28v5M28 30.500h5" stroke="${i < 11 ? "#001060" : i % 3 ? "#500" : "#000"}" stroke-width="1.2"/>`;
      out += `<g transform="translate(${(i % 9) * 34} ${Math.floor(i / 9) * 34})"><path d="M0 0h34v34H0z" fill="#fff"/>${typeof b === "string" ? b : spray(b)}${mark}</g>`;
    });
    out += '<path d="M204.500 136.500h33v33h-33z" fill="none" stroke="#000"/>';
    document.getElementById("brushes").innerHTML = out;
  </script>
</body>
</html>
